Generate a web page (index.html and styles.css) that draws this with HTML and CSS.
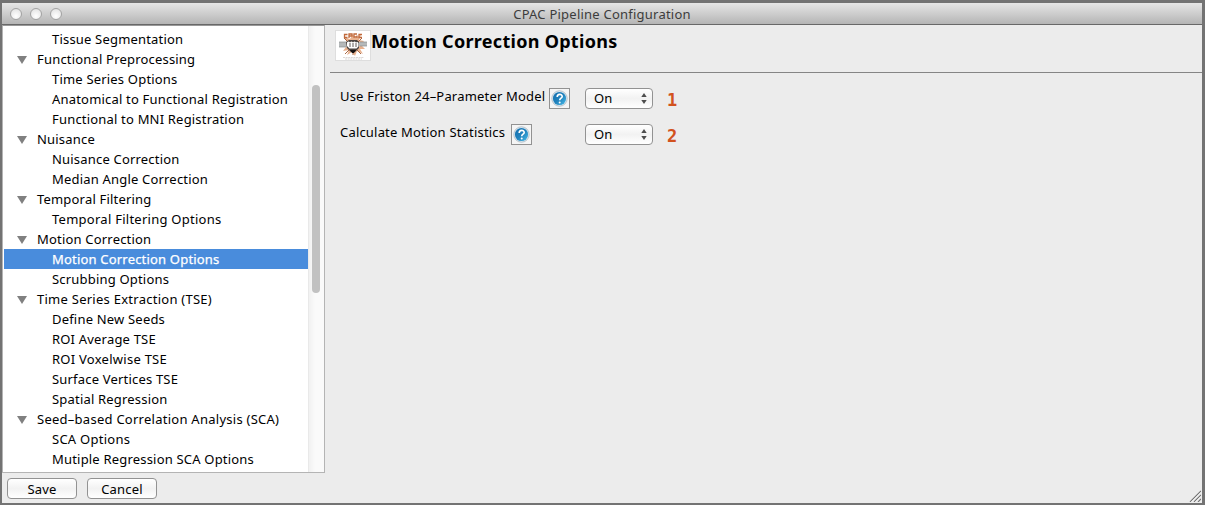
FILE: index.html
```html
<!DOCTYPE html>
<html lang="en">
<head>
<meta charset="utf-8">
<title>CPAC Pipeline Configuration</title>
<link rel="stylesheet" href="styles.css">
</head>
<body>
<div class="window">
  <header class="titlebar">
    <div class="lights"><i></i><i></i><i></i></div>
    <span class="window-title">CPAC Pipeline Configuration</span>
  </header>
  <div class="workspace">
    <nav class="tree">
      <ul class="tree-list">
        <li class="leaf">Tissue Segmentation</li>
        <li class="branch">Functional Preprocessing</li>
        <li class="leaf">Time Series Options</li>
        <li class="leaf">Anatomical to Functional Registration</li>
        <li class="leaf">Functional to MNI Registration</li>
        <li class="branch">Nuisance</li>
        <li class="leaf">Nuisance Correction</li>
        <li class="leaf">Median Angle Correction</li>
        <li class="branch">Temporal Filtering</li>
        <li class="leaf wide">Temporal Filtering Options</li>
        <li class="branch">Motion Correction</li>
        <li class="leaf selected">Motion Correction Options</li>
        <li class="leaf">Scrubbing Options</li>
        <li class="branch wide">Time Series Extraction (TSE)</li>
        <li class="leaf">Define New Seeds</li>
        <li class="leaf">ROI Average TSE</li>
        <li class="leaf wide">ROI Voxelwise TSE</li>
        <li class="leaf">Surface Vertices TSE</li>
        <li class="leaf">Spatial Regression</li>
        <li class="branch wide">Seed–based Correlation Analysis (SCA)</li>
        <li class="leaf wide">SCA Options</li>
        <li class="leaf">Mutiple Regression SCA Options</li>
      </ul>
      <div class="scroll-track"><div class="scroll-thumb"></div></div>
    </nav>
    <main class="panel">
      <div class="panel-head">
        <svg class="logo" width="36" height="31" viewBox="0 0 36 31">
          <rect x=".5" y=".5" width="35" height="30" fill="#fff" stroke="#dedede"/>
          <path d="M18 4l2 4 6-3-2 5 5 1-3 4 4 4-5 0 3 5-6-3-2 5-3-4-5 3 2-5-6 1 3-4-4-3 5-2-3-5 6 2z" fill="#e8b18e"/>
          <path d="M9 8l4 4M27 8l-4 4M10 24l4-4M26 24l-4-4M18 25v-3" stroke="#a86844" stroke-width="1"/>
          <path d="M4 12h8v5H4zM24 12h8v4h-8z" fill="#b5b9ba"/>
          <path d="M4 12h7M4 17h7M25 12h7M25 16h7" stroke="#878d8e" stroke-width=".7"/>
          <path d="M12.500 4.500h-3v3h3M14 8V4h3v2h-3M22 4h-3v3h3V5.500M27 4.500h-3v3h3" fill="none" stroke="#c0683a" stroke-width="1.300"/>
          <path d="M11 12l3-2 8 0 2 2v6l-4 4h-4l-4-4z" fill="#4a4340"/>
          <path d="M12 12.500q1.500-2 3 0 1.500-2 3 0 1.500-2 3 0 1.500-1 2.500.500v3.500l-2 2h-7l-2.500-2.500z" fill="#fff"/>
          <path d="M15 13v4M18 13v4M21 13v4" stroke="#38302d" stroke-width=".8"/>
          <path d="M15 20h6l-2 3h-2z" fill="#161210"/>
          <path d="M8 27.500h21M10 29h17" stroke="#c4bdb9" stroke-width=".6" stroke-dasharray="2 .6"/>
        </svg>
        <h1>Motion Correction Options</h1>
      </div>
      <div class="options">
        <div class="option">
          <label class="label-friston">Use Friston 24–Parameter Model</label>
          <span class="help"><svg width="17" height="17" viewBox="0 0 17 17"><use href="#help-icon"/></svg></span>
          <span class="select"><span class="value">On</span><svg width="6" height="11" viewBox="0 0 6 11"><path d="M3 0l2.700 4H.3zM3 11l2.700-4H.3z" fill="#4d4d4d"/></svg></span>
          <b class="marker">1</b>
        </div>
        <div class="option">
          <label class="label-stats">Calculate Motion Statistics</label>
          <span class="help"><svg width="17" height="17" viewBox="0 0 17 17"><use href="#help-icon"/></svg></span>
          <span class="select"><span class="value">On</span><svg width="6" height="11" viewBox="0 0 6 11"><path d="M3 0l2.700 4H.3zM3 11l2.700-4H.3z" fill="#4d4d4d"/></svg></span>
          <b class="marker">2</b>
        </div>
      </div>
    </main>
  </div>
  <footer class="footer">
    <button>Save</button><button>Cancel</button>
    <svg class="grip" width="12" height="12" viewBox="0 0 12 12"><path d="M1 12L12 1M5 12l7-7M9 12l3-3" stroke="#737373" stroke-width="1.100"/><path d="M2.200 12L12 2.200M6.200 12L12 6.200" stroke="#fff" stroke-width=".6"/></svg>
  </footer>
</div>
<svg class="symbols" width="0" height="0">
  <defs>
    <linearGradient id="blue" x1="0" y1="0" x2="1" y2="1"><stop offset="0" stop-color="#156fae"/><stop offset=".5" stop-color="#2081bc"/><stop offset="1" stop-color="#49bce9"/></linearGradient>
    <g id="help-icon">
      <circle cx="8.500" cy="8.500" r="7.700" fill="#e2edf4" stroke="#a5b4bf" stroke-width=".8"/>
      <circle cx="8.500" cy="8.500" r="6.600" fill="url(#blue)"/>
      <path d="M6.200 6.900c0-3.300 5-3.300 5-.5 0 1.900-2.500 1.700-2.500 3.900" fill="none" stroke="#fff" stroke-width="1.600"/>
      <circle cx="8.700" cy="12.400" r="1" fill="#fff"/>
    </g>
  </defs>
</svg>
</body>
</html>
```
FILE: styles.css
```css
* { box-sizing: border-box; }
body {
  margin: 0;
  width: 1205px;
  height: 505px;
  overflow: hidden;
  background: #737373;
  font: 13px/20px "Noto Sans", sans-serif;
  letter-spacing: .19px;
  color: #000;
}
.window {
  margin: 3px 3px 2px 2px;
  height: 500px;
  display: flex;
  flex-direction: column;
  background: #ececec;
}
.titlebar {
  height: 22px;
  flex: none;
  display: grid;
  grid-template-columns: 80px 1fr 80px;
  align-items: center;
  background: linear-gradient(#e6e6e6, #b5b5b5);
  border-bottom: 1px solid #686868;
}
.lights { display: flex; gap: 8px; padding-left: 8px; }
.lights i {
  width: 12px;
  height: 12px;
  border: 1px solid #a3a3a3;
  border-radius: 50%;
  background: radial-gradient(circle at 50% 70%, #fff, #dedede);
}
.window-title { text-align: center; color: #3c3c3c; letter-spacing: .23px; }
.workspace { display: flex; height: 448px; }
.tree {
  width: 323px;
  display: flex;
  background: #fff;
  border: 1px solid #b4b4b4;
  border-top-color: #989898;
}
.tree-list {
  width: 305px;
  margin: 0;
  padding: 3px 0 0 1px;
  list-style: none;
  white-space: nowrap;
}
.tree-list li { height: 20px; }
.tree-list .wide { letter-spacing: .26px; }
.leaf { padding-left: 48px; }
.branch { display: flex; align-items: center; padding-left: 13px; }
.branch::before {
  content: "";
  margin: 1px 10px 0 0;
  border: 5px solid transparent;
  border-top: 8px solid #808080;
  border-bottom: 0;
}
.selected { background: #498cdc; color: #fff; -webkit-text-stroke: .25px #fff; }
.scroll-track {
  flex: 1;
  padding: 59px 0 0 3px;
  background: linear-gradient(90deg, #f1f1f1, #fafafa 40%, #fafafa);
  border-left: 1px solid #e9e9e9;
}
.scroll-thumb { width: 8px; height: 208px; border-radius: 4px; background: #c1c1c1; }
.panel { flex: 1; padding-left: 5px; }
.panel-head {
  height: 48px;
  display: flex;
  align-items: flex-start;
  padding: 5px 0 0 5px;
  border-bottom: 1px solid #858585;
}
h1 { margin: -1px 0 0; font-size: 18px; line-height: 24px; letter-spacing: .29px; white-space: nowrap; }
.options { padding: 14px 0 0 10px; }
.option {
  height: 36px;
  display: grid;
  grid-template-columns: auto 21px 1fr 68px 549px;
  align-items: start;
  white-space: nowrap;
}
.option label { margin-top: -1px; }
.label-friston { width: 209px; }
.label-stats { width: 171px; }
.help {
  grid-column: 2;
  width: 21px;
  height: 21px;
  margin-top: 1px;
  display: grid;
  place-items: center;
  border: 1px solid #929292;
  background: #f5f5f5;
}
.select {
  grid-column: 4;
  width: 68px;
  height: 21px;
  margin-top: 1px;
  padding: 0 5px 0 8px;
  display: flex;
  align-items: center;
  justify-content: space-between;
  border: 1px solid #929292;
  border-radius: 4px;
  background: linear-gradient(#fff, #f2f2f2 50%, #fff);
}
.value { line-height: 18px; padding-bottom: 2px; }
.marker {
  padding: 3px 0 0 14px;
  color: #d2521e;
  font: bold 17px/20px "DejaVu Sans Mono", monospace;
}
.footer { position: relative; height: 30px; display: flex; gap: 10px; padding: 5px 0 0 5px; }
button {
  width: 70px;
  height: 21px;
  padding: 0;
  font: 13px/18px "Noto Sans", sans-serif;
  letter-spacing: .19px;
  color: #000;
  border: 1px solid #929292;
  border-radius: 4px;
  background: linear-gradient(#fff, #f2f2f2 50%, #fff);
}
.grip { position: absolute; right: 1px; bottom: 1px; }
.symbols { position: absolute; }
```
